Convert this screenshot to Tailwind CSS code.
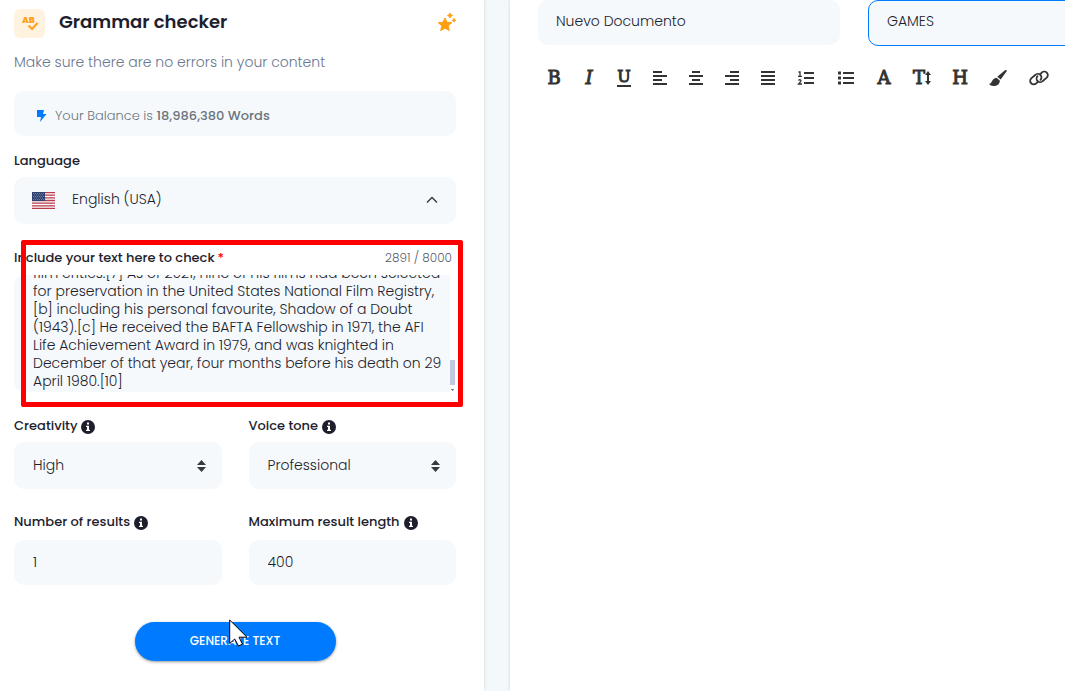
<!DOCTYPE html>
<html lang="en">
<head>
  <meta charset="UTF-8" />
  <meta name="viewport" content="width=device-width, initial-scale=1.0" />
  <title>Grammar checker</title>
  <script src="https://cdn.jsdelivr.net/npm/@tailwindcss/browser@4"></script>
</head>
<body class="bg-[#f3f8fb] font-[Poppins,Inter,sans-serif] text-sm text-[#1e1e2d]">

  <div class="grid min-h-screen grid-cols-[484fr_555fr] gap-[26px] overflow-hidden">

    <!-- Form panel -->
    <form class="min-w-0 bg-white pt-[9px] pr-7 pl-[14px] shadow-[0_0_3px_rgba(0,0,0,0.15)]">

      <header class="flex h-[29px] items-center">
        <svg class="h-[29px] w-[31px] shrink-0 rounded-md bg-[#fff2df]" viewBox="0 0 31 29" fill="none">
          <text x="8" y="14" font-family="Poppins" font-size="9" font-weight="800" fill="#ffa11a">AB</text>
          <path d="M14.500 16.500l3.500 3.500 5.500-6" stroke="#ffa11a" stroke-width="2" />
        </svg>
        <h1 class="ml-[14px] pb-1 text-lg leading-6 font-semibold">Grammar checker</h1>
        <svg class="-mt-1 ml-auto h-5 w-5 shrink-0" viewBox="0 0 20 20" fill="#ff9f0f">
          <path d="M9 6l2 4.200 4.700.5-3.500 3.100 1.100 4.700L9 16.200l-4.300 2.300 1.100-4.700-3.500-3.100 4.700-.5z" stroke="#ff9f0f" stroke-linejoin="round" />
          <path d="M14 1l.8 1.700 1.700.8-1.700.8-.8 1.700-.8-1.700-1.700-.8 1.700-.8zM18 6.500l.6 1.200 1.200.6-1.200.6-.6 1.200-.6-1.200-1.200-.6 1.200-.6z" stroke="#ff9f0f" />
        </svg>
      </header>

      <p class="mt-3 leading-6 font-light text-[#6b7790]">Make sure there are no errors in your content</p>

      <div class="mt-[17px] flex h-[45px] items-center rounded-[10px] bg-[#f5f9fc] pt-[5px] pl-[22px] text-[13px] font-light text-[#6c757d]">
        <svg class="mr-2 h-3 w-[11px]" viewBox="0 0 11 12" fill="#007bff"><path d="M1 0h7L7 4h3.500L4 12l1-5H1z" /></svg>
        <span>Your Balance is <b class="font-medium">18,986,380 Words</b></span>
      </div>

      <label for="language" class="mt-4 block text-[13px] leading-[18px] font-medium">Language</label>
      <div class="relative mt-[7px]">
        <svg class="absolute top-[15px] left-[18px] h-[17px] w-[23px]" viewBox="0 0 23 17">
          <path fill="#fff" d="M0 0h23v17H0z" />
          <path stroke="#b83a4b" stroke-width="1.300" d="M0 .6h23M0 3.200h23M0 5.900h23M0 8.500h23M0 11.100h23M0 13.800h23M0 16.400h23" />
          <path fill="#2f4270" d="M0 0h13v9H0z" />
          <path stroke="#8b98b5" stroke-width=".7" stroke-dasharray="1 1" d="M1 1.500h11M2 3h10M1 4.500h11M2 6h10M1 7.500h11" />
        </svg>
        <select id="language" class="h-[47px] w-full appearance-none rounded-[10px] bg-[#f5f9fc] pb-1 pl-[58px] font-light">
          <option>English (USA)</option>
        </select>
        <svg class="absolute top-[19px] right-[18px] h-2 w-3" viewBox="0 0 12 8" fill="none" stroke="#333" stroke-width="1.300"><path d="M1 6.500l5-5 5 5" /></svg>
      </div>

      <!-- Text to check, framed as the highlighted step -->
      <div class="relative mt-6">
        <div class="flex h-[18px] items-center justify-between pt-[2px] pr-1">
          <label for="content" class="flex gap-[3px] text-[13px] font-medium">Include your text here to check<span class="text-[#ff0000]">*</span></label>
          <span class="text-xs font-light text-[#555b6d]">2891 / 8000</span>
        </div>
        <div class="mt-[9px] flex">
          <textarea id="content" class="h-[117px] min-w-0 flex-1 resize-none overflow-hidden rounded-l-[10px] bg-[#f5f9fc] pb-[2px] pl-[19px] text-sm leading-[18px] font-light whitespace-pre">film critics.[7] As of 2021, nine of his films had been selected
for preservation in the United States National Film Registry,
[b] including his personal favourite, Shadow of a Doubt
(1943).[c] He received the BAFTA Fellowship in 1971, the AFI
Life Achievement Award in 1979, and was knighted in
December of that year, four months before his death on 29
April 1980.[10]</textarea>
          <div class="mr-px flex w-[5px] flex-col justify-end">
            <div class="h-[25px] bg-[#bfcae0]"></div>
            <svg class="mt-1 h-[3px] w-[5px]" viewBox="0 0 5 3"><path d="M1 0h3L2.500 2z" fill="#555" /></svg>
          </div>
        </div>
        <div class="pointer-events-none absolute -top-2 -right-[7px] -bottom-[15px] left-[7px] rounded-[2px] border-[5px] border-[#ff0000]"></div>
      </div>

      <div class="mt-[25px] grid grid-cols-2 gap-x-[27px] gap-y-6">
        <div>
          <label for="creativity" class="flex h-[18px] items-center gap-1 pt-px text-[13px] font-medium">Creativity
            <svg class="h-[14px] w-[14px]" viewBox="0 0 14 14"><circle cx="7" cy="7" r="7" fill="#1e1e2d" /><path d="M6 2.500h2v2H6zM5 5.700h3v4h1v1.300H5V9.700h1V7H5z" fill="#fff" /></svg>
          </label>
          <div class="relative mt-[7px]">
            <select id="creativity" class="h-[47px] w-full appearance-none rounded-[10px] bg-[#f5f9fc] pb-[2px] pl-[19px] font-light"><option>High</option></select>
            <svg class="pointer-events-none absolute top-[18px] right-4 h-3 w-[9px]" viewBox="0 0 9 12" fill="#343a40"><path d="M4.500 0L9 5H0zM4.500 12L0 7h9z" /></svg>
          </div>
        </div>
        <div>
          <label for="tone" class="flex h-[18px] items-center gap-1 pt-px text-[13px] font-medium">Voice tone
            <svg class="h-[14px] w-[14px]" viewBox="0 0 14 14"><circle cx="7" cy="7" r="7" fill="#1e1e2d" /><path d="M6 2.500h2v2H6zM5 5.700h3v4h1v1.300H5V9.700h1V7H5z" fill="#fff" /></svg>
          </label>
          <div class="relative mt-[7px]">
            <select id="tone" class="h-[47px] w-full appearance-none rounded-[10px] bg-[#f5f9fc] pb-[2px] pl-[19px] font-light"><option>Professional</option></select>
            <svg class="pointer-events-none absolute top-[18px] right-4 h-3 w-[9px]" viewBox="0 0 9 12" fill="#343a40"><path d="M4.500 0L9 5H0zM4.500 12L0 7h9z" /></svg>
          </div>
        </div>
        <div>
          <label for="results" class="flex h-[18px] items-center gap-1 pt-px text-[13px] font-medium">Number of results
            <svg class="h-[14px] w-[14px]" viewBox="0 0 14 14"><circle cx="7" cy="7" r="7" fill="#1e1e2d" /><path d="M6 2.500h2v2H6zM5 5.700h3v4h1v1.300H5V9.700h1V7H5z" fill="#fff" /></svg>
          </label>
          <input id="results" type="text" value="1" class="mt-[9px] h-[45px] w-full rounded-[10px] bg-[#f5f9fc] pl-[19px] font-light" />
        </div>
        <div>
          <label for="length" class="flex h-[18px] items-center gap-1 pt-px text-[13px] font-medium">Maximum result length
            <svg class="h-[14px] w-[14px]" viewBox="0 0 14 14"><circle cx="7" cy="7" r="7" fill="#1e1e2d" /><path d="M6 2.500h2v2H6zM5 5.700h3v4h1v1.300H5V9.700h1V7H5z" fill="#fff" /></svg>
          </label>
          <input id="length" type="text" value="400" class="mt-[9px] h-[45px] w-full rounded-[10px] bg-[#f5f9fc] pl-[19px] font-light" />
        </div>
      </div>

      <div class="relative mx-auto mt-[37px] w-[201px]">
        <button type="button" class="h-[39px] w-full rounded-full bg-[#007bff] pb-[2px] text-xs font-medium text-white shadow-[0_1px_3px_rgba(0,0,0,0.4)]">GENERATE TEXT</button>
        <!-- Mouse pointer -->
        <svg class="pointer-events-none absolute -top-[3px] left-[94px] h-7 w-[19px]" viewBox="0 0 19 28"><path d="M.7 1v23.500l5-4.500 3.800 7 4-1.800-3.500-7H18z" fill="#fff" stroke="#000" /></svg>
      </div>
    </form>

    <!-- Editor panel -->
    <main class="min-w-0 overflow-hidden bg-white pl-7 shadow-[0_0_3px_rgba(0,0,0,0.15)]">
      <div class="flex gap-7">
        <input type="text" aria-label="Document name" value="Nuevo Documento" class="h-[45px] w-[302px] shrink-0 rounded-[10px] bg-[#f5f9fc] pb-[2px] pl-[18px] font-light" />
        <input type="text" aria-label="Workbook" value="GAMES" class="h-[46px] w-[302px] shrink-0 rounded-[10px] border border-[#007bff] bg-[#f5f9fc] pb-1 pl-[18px] font-light" />
      </div>

      <div class="mt-5 flex h-6 items-center gap-[22px] pl-[9px] font-['DejaVu_Serif',serif] text-lg leading-6 text-[#333] [-webkit-text-stroke:1px_#333]">
        <button type="button" class="flex w-[14px] shrink-0 justify-center">B</button>
        <button type="button" class="flex w-3 shrink-0 justify-center italic">I</button>
        <button type="button" class="flex h-[17px] w-[14px] shrink-0 items-center justify-center border-b-2 border-[#333] text-base leading-4">U</button>
        <button type="button" aria-label="Align left" class="shrink-0"><svg class="h-[14px] w-[14px]" viewBox="0 0 14 14" stroke="currentColor" stroke-width="2"><path d="M0 1h9M0 5h14M0 9h9M0 13h14" /></svg></button>
        <button type="button" aria-label="Align center" class="shrink-0"><svg class="h-[14px] w-[14px]" viewBox="0 0 14 14" stroke="currentColor" stroke-width="2"><path d="M3 1h8M0 5h14M3 9h8M0 13h14" /></svg></button>
        <button type="button" aria-label="Align right" class="shrink-0"><svg class="h-[14px] w-[14px]" viewBox="0 0 14 14" stroke="currentColor" stroke-width="2"><path d="M5 1h9M0 5h14M5 9h9M0 13h14" /></svg></button>
        <button type="button" aria-label="Justify" class="shrink-0"><svg class="h-[14px] w-[14px]" viewBox="0 0 14 14" stroke="currentColor" stroke-width="2"><path d="M0 1h14M0 5h14M0 9h14M0 13h14" /></svg></button>
        <button type="button" aria-label="Numbered list" class="shrink-0"><svg class="h-[14px] w-[18px]" viewBox="0 0 18 14" fill="none" stroke="currentColor"><path d="M7 2h10M7 7h10M7 12h10" stroke-width="2" /><path d="M1.500 1H3v4M1 5.300h4M1.500 9.500c1-1.500 3-.5 2.300.8L1.500 13H5" stroke-width="1.300" /></svg></button>
        <button type="button" aria-label="Bulleted list" class="shrink-0"><svg class="h-[14px] w-[18px]" viewBox="0 0 18 14" stroke="currentColor"><path d="M6 2h11M6 7h11M6 12h11" stroke-width="2" /><path d="M1 2h3M1 7h3M1 12h3" stroke-width="3" /></svg></button>
        <button type="button" class="flex w-[14px] shrink-0 justify-center">A</button>
        <button type="button" aria-label="Text size" class="flex w-[18px] shrink-0 items-center justify-center">T<svg class="h-[14px] w-[6px] shrink-0" viewBox="0 0 6 14" fill="currentColor"><path d="M3 0l3 4H4v6h2l-3 4-3-4h2V4H0z" /></svg></button>
        <button type="button" class="flex w-[14px] shrink-0 justify-center">H</button>
        <button type="button" aria-label="Brush" class="shrink-0"><svg class="h-4 w-[18px]" viewBox="0 0 18 16" fill="currentColor"><path d="M16 .3c1-.8 2.200.2 1.500 1.300l-5.800 8-3.400-2.800zM7.500 7.700l3.300 2.700C11 14 8 16 4.500 16 2.500 16 1 15.200 0 14c3 0 2.500-5.500 7.500-6.300z" /></svg></button>
        <button type="button" aria-label="Link" class="shrink-0"><svg class="h-4 w-5" viewBox="0 0 20 16" fill="none" stroke="currentColor" stroke-width="1.800" stroke-linecap="round"><path d="M8.500 12.300l-1.300 1.100a3.500 3.500 0 0 1-5-5l4-3.400a3.500 3.500 0 0 1 5.300 4.800" /><path d="M11.500 3.700l1.300-1.100a3.500 3.500 0 0 1 5 5l-4 3.400a3.500 3.500 0 0 1-5.300-4.800" /></svg></button>
      </div>
    </main>
  </div>

  <script>
    // Keep the end of the text in view
    const content = document.getElementById("content");
    content.scrollTop = content.scrollHeight;
  </script>
</body>
</html>
